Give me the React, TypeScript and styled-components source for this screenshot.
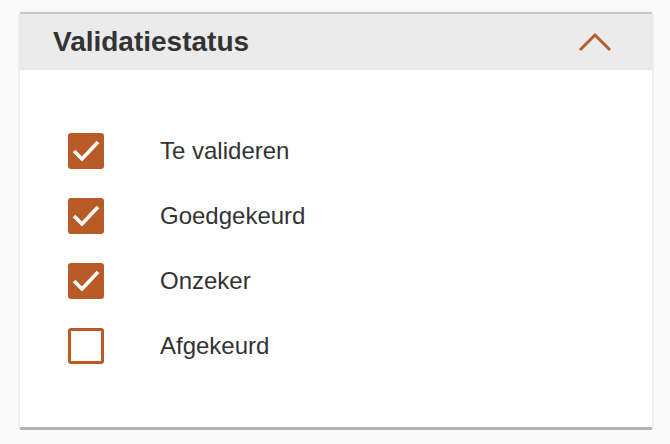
import React, { useState } from "react";
import styled, { createGlobalStyle } from "styled-components";

const GlobalStyle = createGlobalStyle`
  html, body {
    margin: 0;
    padding: 0;
    background: #fafafa;
    font-family: "Liberation Sans", Arial, sans-serif;
  }
`;

const Page = styled.div`
  padding: 12px 18px 0 20px;
`;

const Card = styled.section`
  width: 632px;
  background: #ffffff;
  border-top: 2px solid #c6c6c6;
  border-bottom: 3px solid #b4b4b4;
  box-shadow: 0 1px 3px rgba(0, 0, 0, 0.18);
`;

const Header = styled.div`
  display: flex;
  align-items: center;
  justify-content: space-between;
  height: 56px;
  padding: 0 40px 0 33px;
  background: #ebebeb;
`;

const Title = styled.h2`
  margin: 0;
  font-size: 28px;
  font-weight: 700;
  color: #333333;
`;

const Toggle = styled.button`
  display: flex;
  border: 0;
  background: none;
  padding: 0;
  cursor: pointer;
`;

const List = styled.ul`
  list-style: none;
  margin: 0;
  padding: 63px 0 63px 48px;
  display: flex;
  flex-direction: column;
  gap: 29px;
`;

const Row = styled.li`
  display: flex;
  align-items: center;
  gap: 56px;
  cursor: pointer;
`;

const Box = styled.span<{ $checked: boolean }>`
  box-sizing: border-box;
  width: 36px;
  height: 36px;
  border-radius: 3px;
  border: 3px solid #b95b27;
  background: ${(p) => (p.$checked ? "#b95b27" : "#ffffff")};
  display: flex;
  align-items: center;
  justify-content: center;
`;

const Label = styled.span`
  font-size: 24px;
  color: #333333;
`;

const items = ["Te valideren", "Goedgekeurd", "Onzeker", "Afgekeurd"];

export default function App() {
  const [checked, setChecked] = useState([true, true, true, false]);

  return (
    <Page>
      <GlobalStyle />
      <Card>
        <Header>
          <Title>Validatiestatus</Title>
          <Toggle aria-label="Inklappen">
            <svg width="34" height="20" viewBox="0 0 34 20">
              <path d="M2 18 L17 3 L32 18" fill="none" stroke="#b95b27" strokeWidth="3" />
            </svg>
          </Toggle>
        </Header>
        <List>
          {items.map((label, i) => (
            <Row
              key={label}
              onClick={() => setChecked((c) => c.map((v, j) => (j === i ? !v : v)))}
            >
              <Box $checked={checked[i]}>
                {checked[i] && (
                  <svg width="30" height="26" viewBox="0 0 30 26">
                    <path d="M3 13 L11 21 L27 4" fill="none" stroke="#ffffff" strokeWidth="3.6" />
                  </svg>
                )}
              </Box>
              <Label>{label}</Label>
            </Row>
          ))}
        </List>
      </Card>
    </Page>
  );
}
